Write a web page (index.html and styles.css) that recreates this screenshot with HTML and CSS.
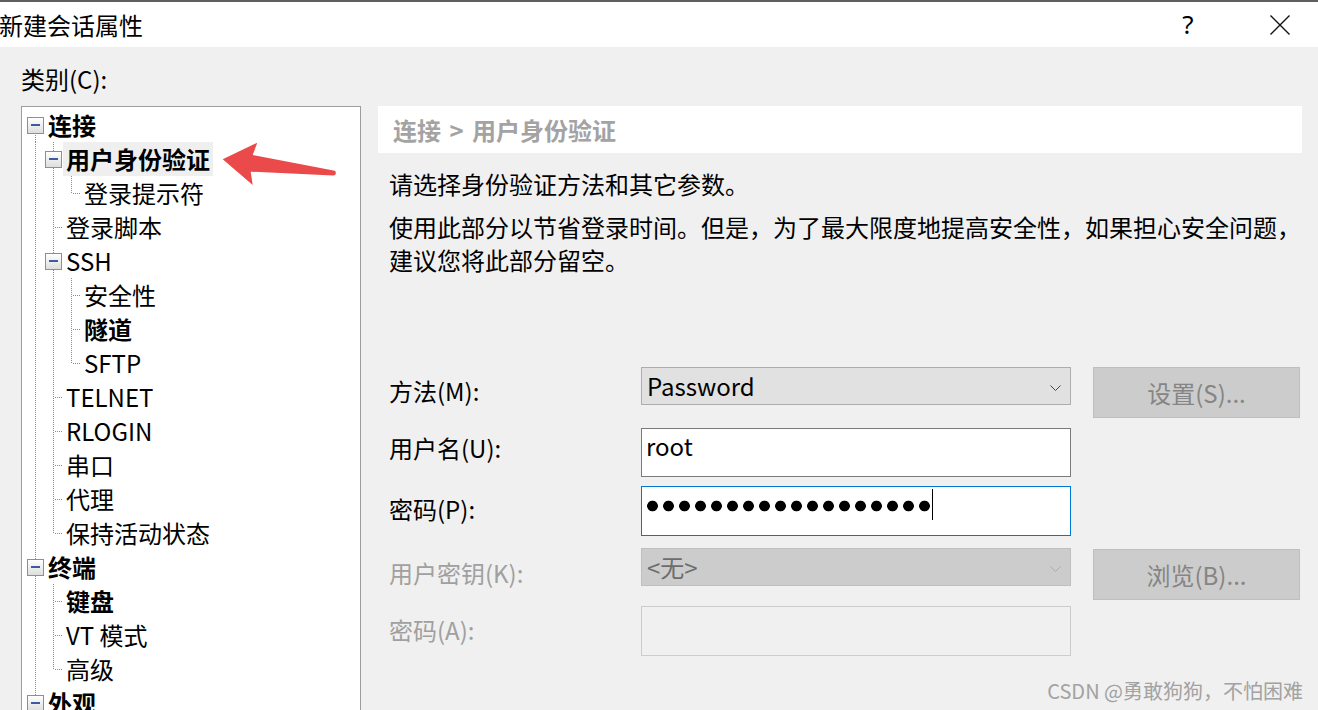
FILE: index.html
```html
<!DOCTYPE html>
<html lang="zh-CN">
  <head>
    <meta charset="UTF-8" />
    <meta name="viewport" content="width=device-width, initial-scale=1.0" />
    <title>新建会话属性</title>
    <link rel="stylesheet" href="styles.css">
  </head>
  <body>
    <div class="titlebar">
      <span class="title">新建会话属性</span>
      <span class="help">?</span>
      <span class="close">
        <svg width="20" height="20" viewBox="0 0 20 20">
          <path d="M0.5 0.5 L19.5 19.5 M19.5 0.5 L0.5 19.5" stroke="#111" stroke-width="1.4" fill="none" />
        </svg>
      </span>
    </div>

    <div class="dialog">
      <div class="left">
        <div class="cat-label">类别(C):</div>
        <div class="tree">
          <div class="row"><span class="ln ln-root"><span class="exp"></span></span><span class="lbl b">连接</span></div>
          <div class="row"><span class="ln ln-v"></span><span class="ln ln-v"><span class="exp"></span></span><span class="lbl b sel">用户身份验证</span></div>
          <div class="row"><span class="ln ln-v"></span><span class="ln ln-v"></span><span class="ln ln-l"></span><span class="lbl">登录提示符</span></div>
          <div class="row"><span class="ln ln-v"></span><span class="ln ln-t"></span><span class="lbl">登录脚本</span></div>
          <div class="row"><span class="ln ln-v"></span><span class="ln ln-v"><span class="exp"></span></span><span class="lbl">SSH</span></div>
          <div class="row"><span class="ln ln-v"></span><span class="ln ln-v"></span><span class="ln ln-t"></span><span class="lbl">安全性</span></div>
          <div class="row"><span class="ln ln-v"></span><span class="ln ln-v"></span><span class="ln ln-t"></span><span class="lbl b">隧道</span></div>
          <div class="row"><span class="ln ln-v"></span><span class="ln ln-v"></span><span class="ln ln-l"></span><span class="lbl">SFTP</span></div>
          <div class="row"><span class="ln ln-v"></span><span class="ln ln-t"></span><span class="lbl">TELNET</span></div>
          <div class="row"><span class="ln ln-v"></span><span class="ln ln-t"></span><span class="lbl">RLOGIN</span></div>
          <div class="row"><span class="ln ln-v"></span><span class="ln ln-t"></span><span class="lbl">串口</span></div>
          <div class="row"><span class="ln ln-v"></span><span class="ln ln-t"></span><span class="lbl">代理</span></div>
          <div class="row"><span class="ln ln-v"></span><span class="ln ln-l"></span><span class="lbl">保持活动状态</span></div>
          <div class="row"><span class="ln ln-v"><span class="exp"></span></span><span class="lbl b">终端</span></div>
          <div class="row"><span class="ln ln-v"></span><span class="ln ln-t"></span><span class="lbl b">键盘</span></div>
          <div class="row"><span class="ln ln-v"></span><span class="ln ln-t"></span><span class="lbl">VT 模式</span></div>
          <div class="row"><span class="ln ln-v"></span><span class="ln ln-l"></span><span class="lbl">高级</span></div>
          <div class="row"><span class="ln ln-v"><span class="exp"></span></span><span class="lbl b">外观</span></div>
        </div>
      </div>

      <div class="right">
        <div class="crumb">连接 &gt; 用户身份验证</div>
        <p class="desc first">请选择身份验证方法和其它参数。</p>
        <p class="desc">使用此部分以节省登录时间。但是，为了最大限度地提高安全性，如果担心安全问题，<br>建议您将此部分留空。</p>

        <div class="form">
          <div class="frow r1">
            <label class="flabel">方法(M):</label>
            <div class="combo">
              <span>Password</span>
              <svg class="chev" width="11" height="6" viewBox="0 0 11 6"><polyline points="0.5,0.5 5.5,5.5 10.5,0.5" fill="none" stroke="#444" stroke-width="1" /></svg>
            </div>
            <div class="btn">设置(S)...</div>
          </div>
          <div class="frow r2">
            <label class="flabel">用户名(U):</label>
            <div class="edit"><span class="val">root</span></div>
          </div>
          <div class="frow r3">
            <label class="flabel">密码(P):</label>
            <div class="edit focus"><span class="dots" aria-label="password"></span><span class="caret"></span></div>
          </div>
          <div class="frow r4">
            <label class="flabel off">用户密钥(K):</label>
            <div class="combo off">
              <span>&lt;无&gt;</span>
              <svg class="chev" width="11" height="6" viewBox="0 0 11 6"><polyline points="0.5,0.5 5.5,5.5 10.5,0.5" fill="none" stroke="#ababab" stroke-width="1" /></svg>
            </div>
            <div class="btn">浏览(B)...</div>
          </div>
          <div class="frow r5">
            <label class="flabel off">密码(A):</label>
            <div class="edit off"></div>
          </div>
        </div>
      </div>

      <svg class="arrow" width="120" height="48" viewBox="0 0 120 48">
        <path d="M2.7 19.3 L37.3 2.7 L32.7 15 L113.5 30.6 A2.4 2.4 0 0 1 113.5 35.4 L30.7 31.7 L32.7 45 Z" fill="#ea4a4a" />
      </svg>

      <div class="watermark">CSDN @勇敢狗狗，不怕困难</div>
    </div>
  </body>
</html>
```

FILE: styles.css
```css
body {
  margin: 0;
  padding: 0;
  background: #f0f0f0;
  font-family: "Noto Sans CJK SC", "Noto Sans", sans-serif;
  font-size: 24px;
  color: #000;
  overflow: hidden;
}

/* title bar */
.titlebar {
  height: 45px;
  border-top: 2px solid #5f5f5f;
  background: #fff;
  display: flex;
  align-items: center;
}

.title {
  margin-left: -1px;
  line-height: 45px;
}

.help {
  margin-left: auto;
  width: 40px;
  margin-right: 44px;
  text-align: center;
  font-family: "Noto Sans", sans-serif;
  font-size: 26px;
  line-height: 45px;
}

.close {
  width: 56px;
  margin-right: 10px;
  display: flex;
  justify-content: center;
  align-items: center;
}

/* dialog body */
.dialog {
  position: relative;
  display: flex;
  height: 663px;
  overflow: hidden;
}

.left {
  width: 340px;
  margin-left: 21px;
  padding-top: 15px;
  flex: none;
}

.cat-label {
  line-height: 34px;
  margin-bottom: 10px;
}

.tree {
  height: 640px;
  background: #fff;
  border: 1px solid #9d9d9d;
  padding: 1px 0 0 4px;
}

.row {
  display: flex;
  align-items: center;
  height: 34px;
}

.lbl {
  margin-left: 1px;
  padding: 0 3px;
  line-height: 34px;
  white-space: nowrap;
}

.lbl.b {
  font-weight: 700;
}

.lbl.sel {
  background: #efefef;
}

/* tree connector lines */
.ln {
  width: 18px;
  height: 34px;
  flex: none;
  display: flex;
  align-items: center;
  justify-content: center;
  background-repeat: no-repeat;
}

.ln-v {
  background-image: repeating-linear-gradient(to bottom, #8a8a8a 0 1px, transparent 1px 2px);
  background-size: 1px 34px;
  background-position: 9px 0;
}

.ln-root {
  background-image: repeating-linear-gradient(to bottom, #8a8a8a 0 1px, transparent 1px 2px);
  background-size: 1px 17px;
  background-position: 9px 17px;
}

.ln-t {
  background-image: repeating-linear-gradient(to bottom, #8a8a8a 0 1px, transparent 1px 2px),
    repeating-linear-gradient(to right, #8a8a8a 0 1px, transparent 1px 2px);
  background-size: 1px 34px, 9px 1px;
  background-position: 9px 0, 11px 17px;
}

.ln-l {
  background-image: repeating-linear-gradient(to bottom, #8a8a8a 0 1px, transparent 1px 2px),
    repeating-linear-gradient(to right, #8a8a8a 0 1px, transparent 1px 2px);
  background-size: 1px 18px, 9px 1px;
  background-position: 9px 0, 11px 17px;
}

.exp {
  width: 15px;
  height: 15px;
  border: 1px solid #8f8f8f;
  background: linear-gradient(#fff, #dedede);
  display: flex;
  align-items: center;
  justify-content: center;
}

.exp::before {
  content: "";
  width: 9px;
  height: 2px;
  background: #3d5aa3;
}

/* right side */
.right {
  width: 924px;
  margin-left: 17px;
  padding-top: 59px;
  flex: none;
}

.crumb {
  height: 47px;
  line-height: 47px;
  background: #fff;
  padding-left: 15px;
  font-weight: 700;
  color: #a3a3a3;
  word-spacing: 3px;
}

.desc {
  margin: 10px 0 0 0;
  padding-left: 11px;
  line-height: 33px;
  white-space: nowrap;
}

.desc.first {
  margin-top: 14px;
}

.form {
  margin-top: 91px;
  padding-left: 11px;
}

.frow {
  display: flex;
  align-items: flex-start;
}

.flabel {
  width: 252px;
  flex: none;
}

.flabel.off {
  color: #a0a0a0;
}

.r1 .flabel { line-height: 48px; }
.r2 { margin-top: 10px; }
.r2 .flabel { line-height: 40px; }
.r3 { margin-top: 9px; }
.r3 .flabel { line-height: 45px; }
.r4 { margin-top: 12px; }
.r4 .flabel { line-height: 50px; }
.r5 { margin-top: 6px; }
.r5 .flabel { line-height: 48px; }

.combo {
  width: 423px;
  height: 36px;
  line-height: 34px;
  border: 1px solid #adadad;
  background: #e1e1e1;
  padding-left: 5px;
  display: flex;
  justify-content: space-between;
  align-items: center;
}

.combo .chev {
  margin-right: 9px;
  margin-top: 3px;
}

.combo.off {
  background: #cccccc;
  border-color: #bfbfbf;
  color: #6d6d6d;
}

.edit {
  width: 428px;
  height: 47px;
  border: 1px solid #7a7a7a;
  background: #fff;
  display: flex;
  align-items: flex-start;
}

.edit .val {
  padding-left: 4px;
  line-height: 34px;
}

.edit.focus {
  height: 48px;
  border-color: #0078d7;
}

.dots {
  margin: 13px 0 0 5px;
  width: 283px;
  height: 12px;
  background: radial-gradient(circle at 5.5px 6px, #000 5px, transparent 5.7px) 0 0 / 16px 12px repeat-x;
}

.caret {
  margin: 2px 0 0 2px;
  width: 1px;
  height: 31px;
  background: #000;
}

.edit.off {
  height: 48px;
  border-color: #cccccc;
  background: #f0f0f0;
}

.btn {
  margin-left: 22px;
  width: 205px;
  height: 49px;
  line-height: 49px;
  border: 1px solid #bfbfbf;
  background: #cccccc;
  color: #858585;
  text-align: center;
}

.r4 .btn {
  margin-top: 1px;
}

/* overlays */
.arrow {
  position: absolute;
  left: 220px;
  top: 93px;
}

.watermark {
  position: absolute;
  right: 15px;
  bottom: 7px;
  font-size: 20px;
  line-height: 24px;
  color: #a2a2a2;
  white-space: nowrap;
}
```
